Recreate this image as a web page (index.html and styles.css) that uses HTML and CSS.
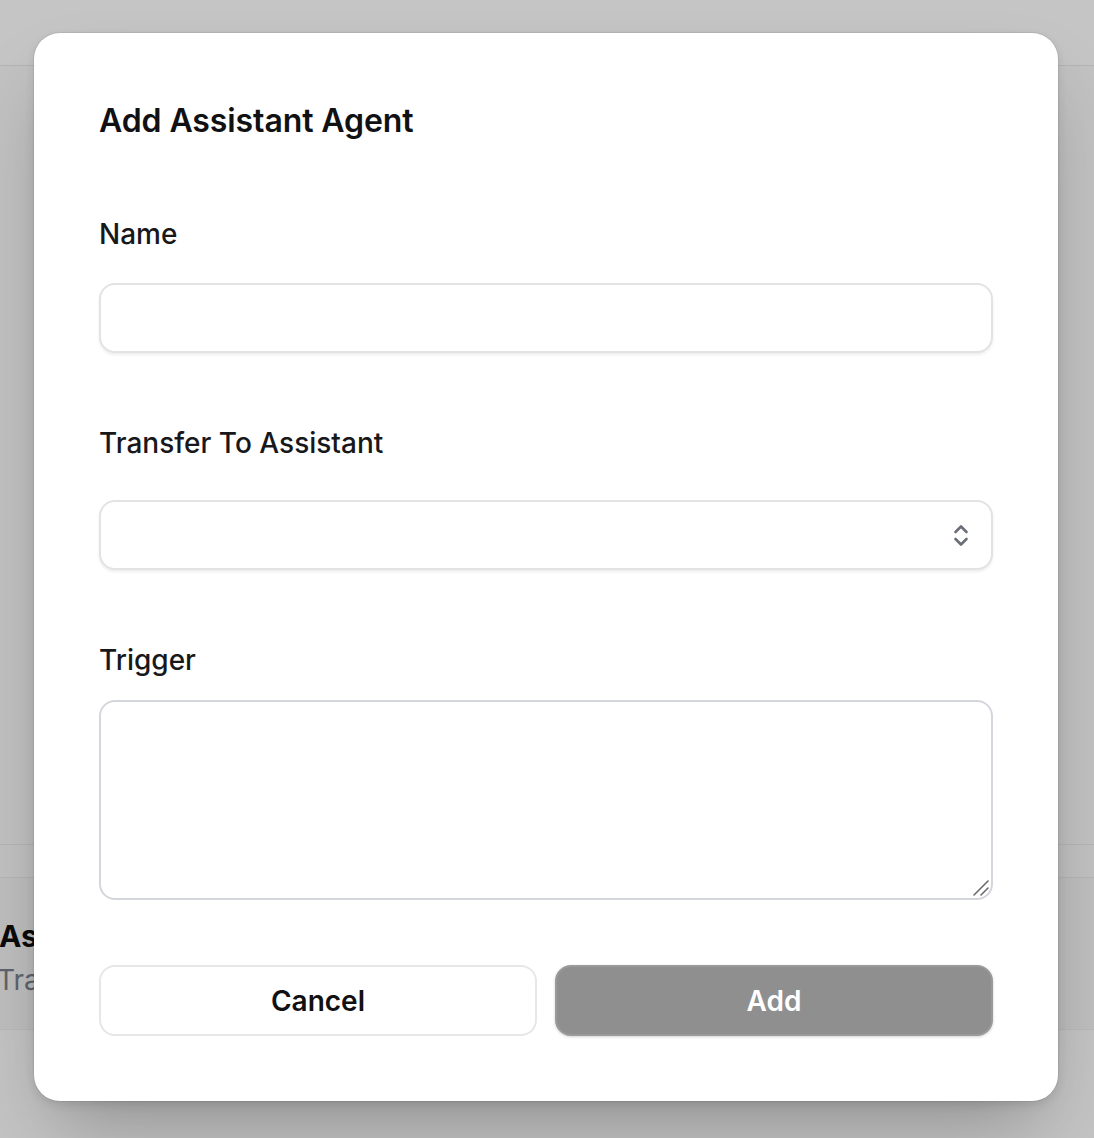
FILE: index.html
```html
<!DOCTYPE html>
<html lang="en">
<head>
<meta charset="utf-8">
<title>Add Assistant Agent</title>
<link rel="stylesheet" href="styles.css">
</head>
<body>
<div class="page">
  <header class="topbar"></header>
  <main class="main">
    <div class="spacer"></div>
    <div class="divider"></div>
    <section class="panel">
      <div class="panel-title">Assistant</div>
      <div class="panel-sub">Transfer</div>
    </section>
  </main>
</div>

<div class="modal" role="dialog" aria-labelledby="dlg-title">
  <h2 class="modal-title" id="dlg-title">Add Assistant Agent</h2>

  <div class="field field-name">
    <label class="label" for="f-name">Name</label>
    <input class="control input" id="f-name" type="text">
  </div>

  <div class="field field-select">
    <label class="label" for="f-transfer">Transfer To Assistant</label>
    <div class="select-wrap">
      <select class="control select" id="f-transfer"><option></option></select>
      <svg class="chevrons" width="16" height="26" viewBox="0 0 16 26" aria-hidden="true">
        <path d="M2.5 10 L8 4.5 L13.5 10" fill="none" stroke="#6b6e76" stroke-width="2.6" stroke-linecap="round" stroke-linejoin="round"/>
        <path d="M2.5 17 L8 22.5 L13.5 17" fill="none" stroke="#6b6e76" stroke-width="2.6" stroke-linecap="round" stroke-linejoin="round"/>
      </svg>
    </div>
  </div>

  <div class="field field-trigger">
    <label class="label" for="f-trigger">Trigger</label>
    <div class="textarea-wrap">
      <textarea class="control textarea" id="f-trigger"></textarea>
      <svg class="grip" width="18" height="18" viewBox="0 0 18 18" aria-hidden="true">
        <path d="M2 16 L16 2" stroke="#6a6a6a" stroke-width="1.6" stroke-linecap="round"/>
        <path d="M9 16 L16 9" stroke="#6a6a6a" stroke-width="1.6" stroke-linecap="round"/>
      </svg>
    </div>
  </div>

  <div class="actions">
    <button class="btn btn-cancel" type="button">Cancel</button>
    <button class="btn btn-add" type="button">Add</button>
  </div>
</div>
</body>
</html>
```

FILE: styles.css
```css
* { box-sizing: border-box; }

html, body {
  margin: 0;
  padding: 0;
}

body {
  background: #c4c4c4;
  font-family: Inter, "Noto Sans", "Liberation Sans", sans-serif;
  width: 1094px;
  height: 1138px;
  overflow: hidden;
}

/* dimmed page behind the dialog */
.page {
  display: flex;
  flex-direction: column;
  height: 1138px;
}

.topbar {
  height: 66px;
  border-bottom: 1px solid #b4b4b4;
  background: #c5c5c5;
  flex: none;
}

.main {
  display: flex;
  flex-direction: column;
  background: #c2c2c2;
}

.spacer {
  height: 779px;
  border-bottom: 1px solid #b6b6b6;
}

.divider {
  height: 33px;
  border-bottom: 1px solid #b6b6b6;
}

.panel {
  height: 152px;
  background: #bfbfbf;
  border-bottom: 1px solid #bababa;
  padding: 38px 0 0 0;
  overflow: hidden;
}

.panel-title {
  font-size: 30px;
  font-weight: 700;
  color: #0b0b0c;
  line-height: 40px;
  margin-left: -1px;
}

.panel-sub {
  font-size: 28px;
  font-weight: 400;
  color: #5f646e;
  line-height: 40px;
  margin-top: 4px;
  margin-left: -3px;
}

/* dialog */
.modal {
  position: absolute;
  left: 34px;
  top: 33px;
  width: 1024px;
  background: #ffffff;
  border-radius: 26px;
  padding: 64px 65px 65px 65px;
  box-shadow:
    0 0 0 1px rgba(0, 0, 0, 0.06),
    0 4px 10px rgba(0, 0, 0, 0.10),
    0 40px 80px -20px rgba(0, 0, 0, 0.28);
  display: flex;
  flex-direction: column;
}

.modal-title {
  margin: 0;
  font-size: 32px;
  line-height: 48px;
  font-weight: 600;
  color: #111113;
  letter-spacing: -0.1px;
}

.field {
  display: flex;
  flex-direction: column;
}

.field-name { margin-top: 69px; }
.field-select { margin-top: 70px; }
.field-trigger { margin-top: 70px; }

.label {
  font-size: 28px;
  line-height: 40px;
  font-weight: 500;
  color: #18181b;
}

.field-name .control { margin-top: 29px; }
.field-select .select-wrap { margin-top: 37px; }
.field-trigger .textarea-wrap { margin-top: 20px; }

.control {
  display: block;
  width: 100%;
  font-family: inherit;
  font-size: 28px;
  color: #111;
  background: #ffffff;
  border: 2px solid #e3e3e5;
  border-radius: 16px;
  outline: none;
  appearance: none;
  -webkit-appearance: none;
  margin: 0;
  box-shadow: 0 2px 3px rgba(0, 0, 0, 0.07);
}

.input,
.select {
  height: 70px;
  padding: 0 24px;
}

.select-wrap,
.textarea-wrap {
  position: relative;
}

.chevrons {
  position: absolute;
  right: 24px;
  top: 22px;
  pointer-events: none;
}

.textarea {
  height: 200px;
  resize: none;
  border-color: #d3d6db;
  box-shadow: none;
  padding: 16px 24px;
}

.grip {
  position: absolute;
  right: 3px;
  bottom: 3px;
  pointer-events: none;
}

.actions {
  margin-top: 65px;
  display: flex;
  gap: 18px;
}

.btn {
  flex: 1 1 0;
  height: 71px;
  border-radius: 16px;
  font-family: inherit;
  font-size: 28px;
  font-weight: 600;
  cursor: pointer;
}

.btn-cancel {
  background: #ffffff;
  color: #111113;
  border: 2px solid #e7e7e9;
}

.btn-add {
  background: #8f8f8f;
  color: #ffffff;
  border: 2px solid #9a9a9a;
  box-shadow: 0 1px 3px rgba(0, 0, 0, 0.18);
}
```
